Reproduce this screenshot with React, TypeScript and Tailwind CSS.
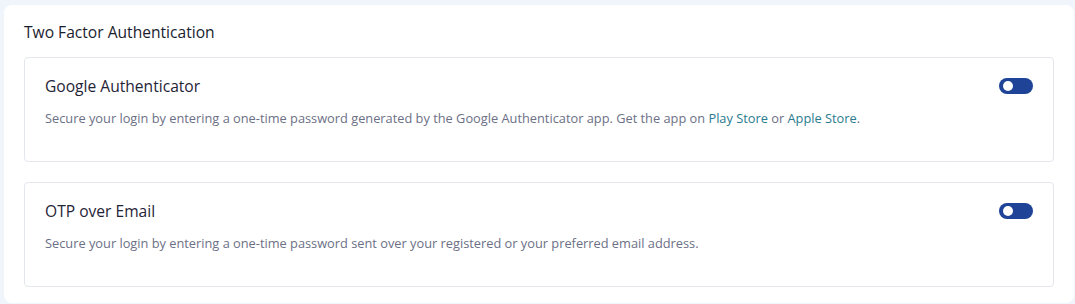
import React from "react";

const font = { fontFamily: "'Open Sans', sans-serif" };

function Toggle() {
  return (
    <button className="relative w-[34px] h-[16px] rounded-full bg-[#1e4397] shrink-0">
      <span className="absolute left-[4px] top-[3px] w-[10px] h-[10px] rounded-full bg-white" />
    </button>
  );
}

function Option({ title, children }: { title: string; children: React.ReactNode }) {
  return (
    <div className="border border-[#e3e6ec] rounded-[4px] bg-white px-5 pt-[18px] pb-[33px]">
      <div className="flex items-center justify-between">
        <h3 className="text-[15.6px] leading-[20px] text-[#1f2437]">{title}</h3>
        <Toggle />
      </div>
      <p className="mt-[12px] text-[12.8px] leading-[20px] text-[#6c7086]">{children}</p>
    </div>
  );
}

export default function App() {
  return (
    <div className="min-h-screen bg-[#f0f4fb] pl-1 pr-px pt-[5px]" style={font}>
      <div className="bg-white rounded-lg h-[298px] px-5 pt-[17px]">
        <h2 className="text-[15.6px] leading-[20px] text-[#1a1d2e] mb-[15px]">Two Factor Authentication</h2>
        <div className="flex flex-col gap-5">
          <Option title="Google Authenticator">
            Secure your login by entering a one-time password generated by the Google Authenticator app. Get the app on{" "}
            <a href="#" className="text-[#2a7b8f]">Play Store</a> or{" "}
            <a href="#" className="text-[#2a7b8f]">Apple Store</a>.
          </Option>
          <Option title="OTP over Email">
            Secure your login by entering a one-time password sent over your registered or your preferred email address.
          </Option>
        </div>
      </div>
    </div>
  );
}
